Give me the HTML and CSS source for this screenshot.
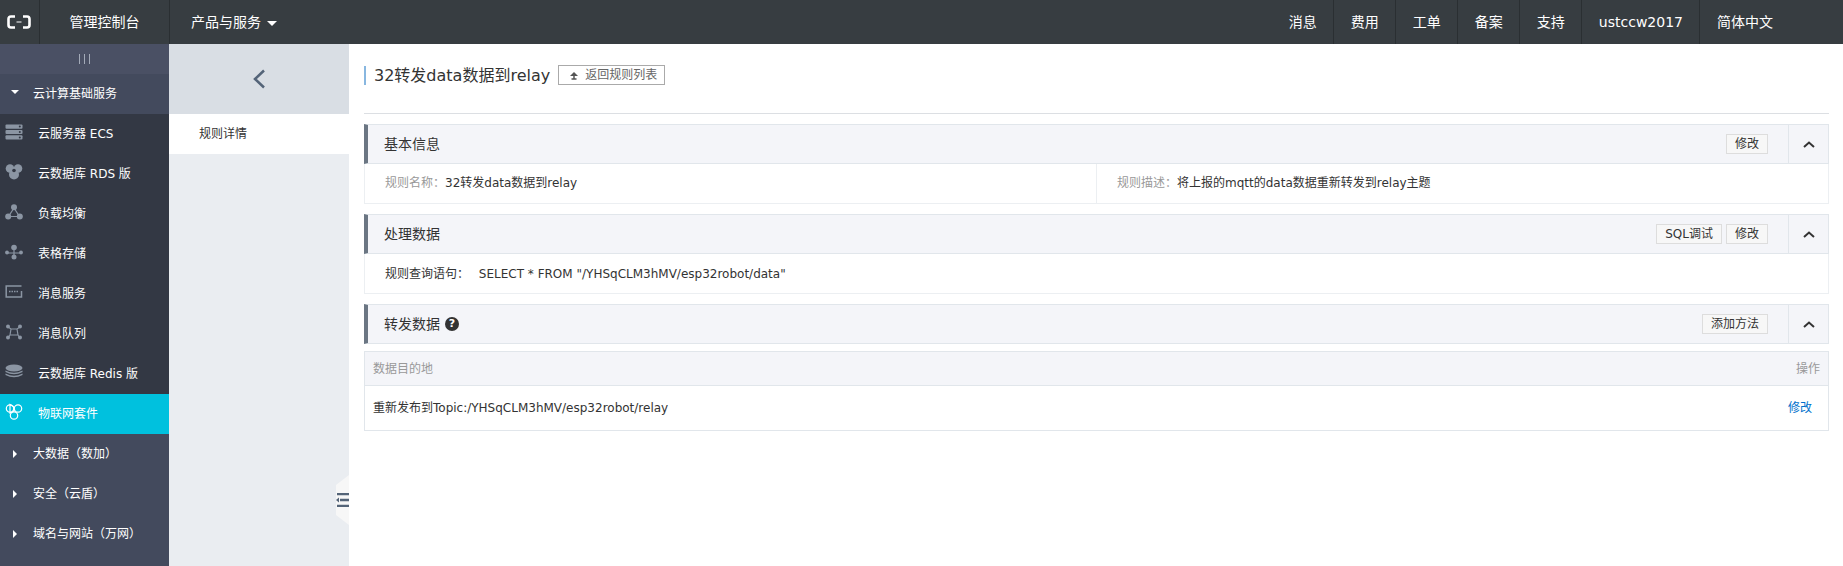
FILE: index.html
```html
<!DOCTYPE html>
<html lang="zh-CN">
<head>
<meta charset="utf-8">
<title>规则详情</title>
<link rel="stylesheet" href="styles.css">
</head>
<body>
<header class="topbar">
  <a class="logo"><svg width="24" height="14" viewBox="0 0 24 14"><path d="M8 1.5H4Q1.5 1.5 1.5 4V10Q1.500 12.500 4 12.500H8M16 1.500H20Q22.500 1.500 22.500 4V10Q22.500 12.500 20 12.500H16" fill="none" stroke="#fff" stroke-width="2.600"/><path d="M9.500 7H14.500" stroke="#fff" stroke-width="1"/></svg></a>
  <a class="top-home">管理控制台</a>
  <a class="top-products">产品与服务<i class="caret"></i></a>
  <nav class="top-nav">
    <a>消息</a><a>费用</a><a>工单</a><a>备案</a><a>支持</a><a>ustccw2017</a><a>简体中文</a>
  </nav>
</header>
<div class="layout">
  <aside class="sidebar">
    <div class="side-toggle"><i></i><i></i><i></i></div>
    <div class="side-group"><i class="tri-down"></i>云计算基础服务</div>
    <ul class="side-list">
      <li><svg class="ico" viewBox="0 0 18 16"><rect x="0.500" y="0.500" width="17" height="4.200" rx="1"/><rect x="0.500" y="5.900" width="17" height="4.200" rx="1"/><rect x="0.500" y="11.300" width="17" height="4.200" rx="1"/><circle cx="14.800" cy="2.600" r="1" class="hole"/><circle cx="14.800" cy="8" r="1" class="hole"/><circle cx="14.800" cy="13.400" r="1" class="hole"/></svg>云服务器 ECS</li>
      <li><svg class="ico" viewBox="0 0 18 16"><circle cx="5" cy="4.500" r="4.300"/><circle cx="13" cy="4.500" r="4.300"/><circle cx="9" cy="10.500" r="5"/><circle cx="9" cy="6.500" r="1.800" class="hole"/></svg>云数据库 RDS 版</li>
      <li><svg class="ico" viewBox="0 0 18 16"><path d="M9 4L3.500 12.500H14.500Z" fill="none" stroke="#8b95a3" stroke-width="1.200"/><circle cx="9" cy="3.200" r="3"/><circle cx="3.200" cy="12.500" r="3"/><circle cx="14.800" cy="12.500" r="3"/></svg>负载均衡</li>
      <li><svg class="ico" viewBox="0 0 18 16"><path d="M2 9H16M9 4V13" stroke="#8b95a3" stroke-width="1.200"/><circle cx="9" cy="3.500" r="2.800"/><circle cx="2" cy="8.500" r="1.900"/><circle cx="16" cy="8.500" r="1.900"/><circle cx="9" cy="13" r="2.500"/></svg>表格存储</li>
      <li><svg class="ico" viewBox="0 0 18 16"><path d="M16.500 2H1.200V13H4M1.500 13H16.500V7" fill="none" stroke="#8b95a3" stroke-width="1.500"/><path d="M4 7.500H13" stroke="#8b95a3" stroke-width="1.500" stroke-dasharray="1.500 1"/></svg>消息服务</li>
      <li><svg class="ico" viewBox="0 0 18 16"><path d="M3 3L6 5H12L15 3M6 5L5 11L3 14M12 5L13 11L15 14M5 11H13" fill="none" stroke="#8b95a3" stroke-width="1.200"/><circle cx="3" cy="2.500" r="2"/><circle cx="15" cy="2.500" r="2"/><circle cx="3" cy="13.500" r="2"/><circle cx="15" cy="13.500" r="2"/></svg>消息队列</li>
      <li><svg class="ico" viewBox="0 0 18 16"><ellipse cx="9" cy="4" rx="8.500" ry="3.500"/><path d="M0.500 6.500Q9 11 17.500 6.500V8Q9 12.500 0.500 8ZM0.500 9.500Q9 14 17.500 9.500V11Q9 15.500 0.500 11Z"/></svg>云数据库 Redis 版</li>
      <li class="active"><svg class="ico ico-light" viewBox="0 0 18 18"><circle cx="5" cy="5.500" r="3.700"/><circle cx="13" cy="5.500" r="3.700"/><circle cx="9" cy="12.500" r="3.700"/><path d="M5 1.500L9 4V8L5 10Z"/></svg>物联网套件</li>
    </ul>
    <div class="side-group closed"><i class="tri-right"></i>大数据（数加）</div>
    <div class="side-group closed"><i class="tri-right"></i>安全（云盾）</div>
    <div class="side-group closed"><i class="tri-right"></i>域名与网站（万网）</div>
  </aside>
  <aside class="subnav">
    <div class="subnav-back"><svg width="14" height="20" viewBox="0 0 14 20"><path d="M12 1.500L3 10L12 18.500" fill="none" stroke="#546478" stroke-width="2.500"/></svg></div>
    <div class="subnav-item">规则详情</div>
    <div class="subnav-handle"><svg width="13" height="14" viewBox="0 0 13 14"><path d="M1 1H13M4 7H13M1 13H13" stroke="#546478" stroke-width="2.600"/><path d="M0 7L3 4.500V9.500Z" fill="#546478"/></svg></div>
  </aside>
  <main class="main">
    <div class="page-title">
      <h1>32转发data数据到relay</h1>
      <a class="back-btn"><svg width="10" height="9" viewBox="0 0 10 9"><path d="M5 1L9 5H1Z" fill="#555"/><path d="M5 5V8M2.500 8H7.500" stroke="#555" stroke-width="1.500"/></svg>返回规则列表</a>
    </div>
    <section class="panel">
      <div class="panel-head">
        <h2>基本信息</h2>
        <div class="panel-actions"><a class="btn">修改</a></div>
        <div class="panel-toggle"><svg width="12" height="7" viewBox="0 0 12 7"><path d="M1 6L6 1.500L11 6" fill="none" stroke="#333" stroke-width="2"/></svg></div>
      </div>
      <div class="panel-body split">
        <div class="field"><span class="label">规则名称：</span>32转发data数据到relay</div>
        <div class="field"><span class="label">规则描述：</span>将上报的mqtt的data数据重新转发到relay主题</div>
      </div>
    </section>
    <section class="panel">
      <div class="panel-head">
        <h2>处理数据</h2>
        <div class="panel-actions"><a class="btn">SQL调试</a><a class="btn">修改</a></div>
        <div class="panel-toggle"><svg width="12" height="7" viewBox="0 0 12 7"><path d="M1 6L6 1.500L11 6" fill="none" stroke="#333" stroke-width="2"/></svg></div>
      </div>
      <div class="panel-body"><div class="field query">规则查询语句： <span class="sql">SELECT * FROM "/YHSqCLM3hMV/esp32robot/data"</span></div></div>
    </section>
    <section class="panel tight">
      <div class="panel-head">
        <h2>转发数据<i class="help">?</i></h2>
        <div class="panel-actions"><a class="btn">添加方法</a></div>
        <div class="panel-toggle"><svg width="12" height="7" viewBox="0 0 12 7"><path d="M1 6L6 1.500L11 6" fill="none" stroke="#333" stroke-width="2"/></svg></div>
      </div>
    </section>
    <table class="data-table">
      <thead><tr><th>数据目的地</th><th class="right">操作</th></tr></thead>
      <tbody><tr><td>重新发布到Topic:/YHSqCLM3hMV/esp32robot/relay</td><td class="right"><a class="link">修改</a></td></tr></tbody>
    </table>
  </main>
</div>
</body>
</html>
```

FILE: styles.css
```css
* { box-sizing: border-box; }
html, body { height: 100%; }
body {
  margin: 0;
  overflow: hidden;
  background: #fff;
  color: #333;
  font: 12px/1.500 "DejaVu Sans", "Noto Sans CJK SC", sans-serif;
}
h1, h2, ul { margin: 0; padding: 0; font-weight: normal; }
ul { list-style: none; }
i { font-style: normal; }

.topbar {
  display: flex;
  height: 44px;
  background: #373d41;
  color: #fff;
  font-size: 14px;
  line-height: 44px;
}
.logo {
  width: 40px;
  display: flex;
  align-items: center;
  justify-content: center;
  padding-right: 2px;
  border-right: 1px solid #2a2f32;
}
.top-home {
  width: 130px;
  text-align: center;
  border-right: 1px solid #2a2f32;
}
.top-products { padding-left: 21px; }
.caret {
  display: inline-block;
  margin-left: 6px;
  vertical-align: middle;
  border: 5px solid transparent;
  border-top-color: #fff;
  border-bottom: 0;
}
.top-nav { display: flex; margin-left: auto; margin-right: 54px; }
.top-nav a { padding: 0 16px 0 17px; border-right: 1px solid #2a2f32; }
.top-nav a:last-child { border-right: 0; }

.layout { display: flex; height: 522px; }

.sidebar {
  width: 169px;
  flex: none;
  background: #434a5d;
  color: #fff;
  overflow: hidden;
}
.side-toggle {
  height: 30px;
  background: #4a5064;
  display: flex;
  justify-content: center;
  gap: 4px;
  padding-top: 10px;
}
.side-toggle i { width: 1px; height: 10px; background: #a3aab8; }
.side-group {
  height: 40px;
  line-height: 40px;
  padding-left: 33px;
  position: relative;
  letter-spacing: 0;
}
.tri-down, .tri-right {
  position: absolute;
  width: 0;
  height: 0;
  border: 4px solid transparent;
}
.tri-down { left: 11px; top: 16px; border-width: 4px 4px 0; border-top-color: #fff; }
.tri-right { left: 13px; top: 16px; border-width: 4px 0 4px 4px; border-left-color: #fff; }
.side-list li {
  height: 40px;
  line-height: 40px;
  display: flex;
  align-items: center;
  background: #333844;
}
.side-list li.active { background: #00c1de; }
.ico { width: 18px; height: 16px; margin: 0 15px 0 5px; fill: #8b95a3; flex: none; position: relative; top: -2px; }
.ico .hole { fill: #333844; }
.ico-light { height: 18px; fill: none; stroke: #fff; stroke-width: 1.200; }

.subnav {
  width: 180px;
  flex: none;
  background: #eaedf1;
  position: relative;
}
.subnav-back {
  height: 70px;
  background: #d9dee4;
  display: flex;
  align-items: center;
  justify-content: center;
}
.subnav-item {
  height: 40px;
  line-height: 40px;
  background: #fff;
  padding-left: 30px;
}
.subnav-handle {
  position: absolute;
  right: 0;
  top: 431px;
  width: 13px;
  height: 50px;
  background: #f7f7f7;
  clip-path: polygon(100% 0, 100% 100%, 0 80%, 0 20%);
  display: flex;
  align-items: center;
}

.main { flex: 1; min-width: 0; padding: 0 14px 0 15px; }
.page-title {
  height: 70px;
  margin-bottom: 10px;
  border-bottom: 1px solid #dcdfe3;
  display: flex;
  align-items: flex-start;
  padding-top: 22px;
}
.page-title h1 {
  font-size: 16px;
  line-height: 19px;
  padding-left: 8px;
  border-left: 2px solid #88b7e0;
  margin-right: 8px;
}
.back-btn {
  display: flex;
  align-items: center;
  gap: 6px;
  height: 20px;
  margin-top: -1px;
  padding: 0 7px 0 10px;
  border: 1px solid #aaa;
  color: #666;
}

.panel { margin-bottom: 10px; }
.panel.tight { margin-bottom: 7px; }
.panel-head {
  display: flex;
  align-items: center;
  height: 40px;
  background: #f4f5f9;
  border: 1px solid #e1e6eb;
  border-left: 4px solid #6b7683;
}
.panel-head h2 { font-size: 14px; padding-left: 16px; display: flex; align-items: center; gap: 5px; }
.help {
  width: 14px;
  height: 14px;
  border-radius: 50%;
  background: #333;
  color: #fff;
  font-size: 11px;
  font-weight: bold;
  line-height: 14px;
  text-align: center;
}
.panel-actions { margin-left: auto; display: flex; gap: 4px; padding-right: 20px; }
.btn {
  height: 20px;
  line-height: 18px;
  padding: 0 8px;
  background: #f7f7f7;
  border: 1px solid #ddd;
}
.panel-toggle {
  width: 40px;
  align-self: stretch;
  border-left: 1px solid #e1e6eb;
  display: flex;
  align-items: center;
  justify-content: center;
}
.panel-body {
  height: 40px;
  border: 1px solid #eceff2;
  border-top: 0;
  display: flex;
  align-items: center;
}
.panel-body.split .field { flex: 1; height: 100%; line-height: 39px; }
.panel-body.split .field + .field { border-left: 1px solid #eceff2; }
.field { padding-left: 20px; }
.label { color: #999; }
.query { padding-left: 20px; }
.sql { margin-left: 6px; }

.data-table {
  width: 100%;
  border-collapse: collapse;
  border: 1px solid #e1e6eb;
}
.data-table th {
  height: 34px;
  font-weight: normal;
  color: #999;
  background: #f4f5f9;
  text-align: left;
  padding: 0 8px;
  border-bottom: 1px solid #e1e6eb;
}
.data-table td { height: 45px; padding: 0 8px; }
.data-table .right { text-align: right; }
.link { color: #0070cc; padding-right: 8px; }
```
